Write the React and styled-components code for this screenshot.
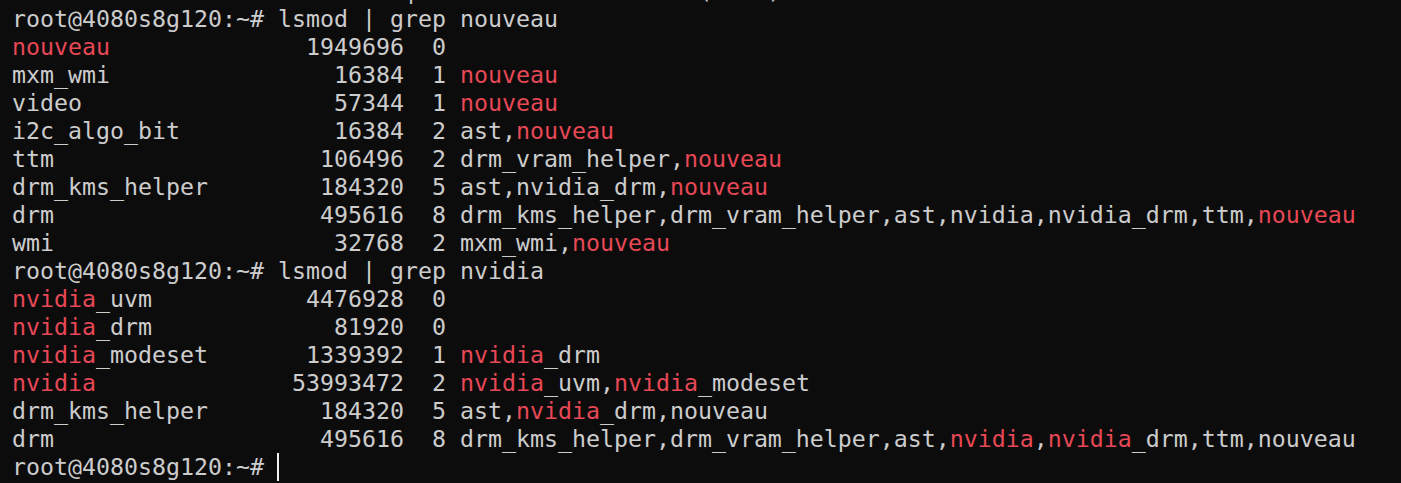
import styled, { createGlobalStyle } from "styled-components"

const PROMPT = "root@4080s8g120:~# "

const blocks = [
    {
        command: "lsmod | grep nouveau",
        match: "nouveau",
        rows: [
            ["nouveau", "1949696", "0", ""],
            ["mxm_wmi", "16384", "1", "nouveau"],
            ["video", "57344", "1", "nouveau"],
            ["i2c_algo_bit", "16384", "2", "ast,nouveau"],
            ["ttm", "106496", "2", "drm_vram_helper,nouveau"],
            ["drm_kms_helper", "184320", "5", "ast,nvidia_drm,nouveau"],
            ["drm", "495616", "8", "drm_kms_helper,drm_vram_helper,ast,nvidia,nvidia_drm,ttm,nouveau"],
            ["wmi", "32768", "2", "mxm_wmi,nouveau"],
        ],
    },
    {
        command: "lsmod | grep nvidia",
        match: "nvidia",
        rows: [
            ["nvidia_uvm", "4476928", "0", ""],
            ["nvidia_drm", "81920", "0", ""],
            ["nvidia_modeset", "1339392", "1", "nvidia_drm"],
            ["nvidia", "53993472", "2", "nvidia_uvm,nvidia_modeset"],
            ["drm_kms_helper", "184320", "5", "ast,nvidia_drm,nouveau"],
            ["drm", "495616", "8", "drm_kms_helper,drm_vram_helper,ast,nvidia,nvidia_drm,ttm,nouveau"],
        ],
    },
]

// same layout lsmod uses: "%-19s %8lu  %d %s"
function formatRow([name, size, used, by]) {
    return name.padEnd(19) + " " + size.padStart(8) + "  " + used + (by ? " " + by : "")
}

function highlight(text, term) {
    const parts = text.split(term)
    return parts.map((part, i) => (
        <span key={i}>
            {part}
            {i < parts.length - 1 && <Match>{term}</Match>}
        </span>
    ))
}

export default function App() {
    return (
        <>
            <GlobalStyle />
            <Terminal>
                <ClippedLine>{" ".repeat(28) + "|" + " ".repeat(20) + "(    )"}</ClippedLine>
                {blocks.map(block => (
                    <div key={block.command}>
                        <Line>{PROMPT + block.command}</Line>
                        {block.rows.map((row, i) => (
                            <Line key={i}>{highlight(formatRow(row), block.match)}</Line>
                        ))}
                    </div>
                ))}
                <Line>
                    {PROMPT}
                    <Cursor />
                </Line>
            </Terminal>
        </>
    )
}

const GlobalStyle = createGlobalStyle`
    html, body {
        margin: 0;
        padding: 0;
        background: #0c0c0c;
        overflow: hidden;
    }
`

const Terminal = styled.div`
    width: 1401px;
    height: 483px;
    box-sizing: border-box;
    padding: 5px 0 0 12px;
    background: #0c0c0c;
    color: #cccccc;
    font-family: "DejaVu Sans Mono", "Liberation Mono", monospace;
    font-size: 23.26px;
    line-height: 28px;
    overflow: hidden;
`

const Line = styled.div`
    white-space: pre;
    height: 28px;
`

const ClippedLine = styled(Line)`
    margin-top: -28px;
`

const Match = styled.span`
    color: #e74856;
`

const Cursor = styled.span`
    display: inline-block;
    width: 2px;
    height: 28px;
    margin-left: -1px;
    vertical-align: top;
    background: #f2f2f2;
`
